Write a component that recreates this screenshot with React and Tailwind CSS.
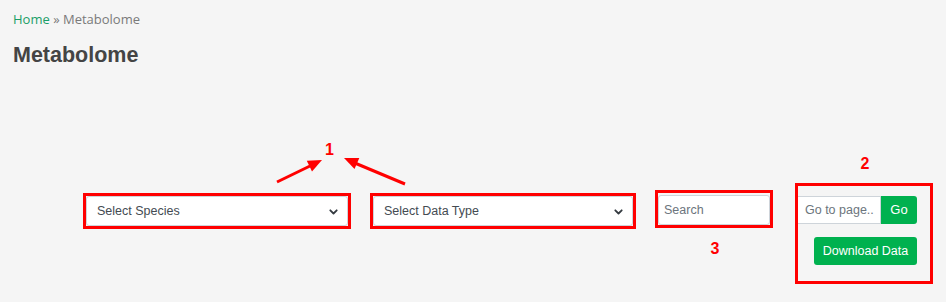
import React from "react";

const sans = { fontFamily: '"Liberation Sans", Arial, sans-serif' };

function Chevron() {
  return (
    <svg width="9" height="6" viewBox="0 0 9 6" className="absolute right-[9px] top-[12px]">
      <path d="M1.3 1.3 L4.5 4.5 L7.7 1.3" fill="none" stroke="#343a40" strokeWidth="1.8" strokeLinecap="round" strokeLinejoin="round" />
    </svg>
  );
}

function Select({ label, w }) {
  return (
    <div className={`relative h-[30px] ${w} bg-white border border-[#ced4da] rounded-[3px]`}>
      <div className="pl-[10px] leading-[28px] text-[12.5px] text-[#444b52]">{label}</div>
      <Chevron />
    </div>
  );
}

function Num({ children }) {
  return <div className="text-[16px] font-bold text-[#ff0000] leading-[20px]">{children}</div>;
}

export default function App() {
  return (
    <div className="relative w-[946px] h-[302px] bg-[#f5f5f5] overflow-hidden">
      <div className="px-[13px] pt-[9px]">
        <div className="text-[13px] leading-[20px] text-[#7a7a7a]" style={{ fontFamily: '"Open Sans", sans-serif' }}>
          <span className="text-[#1a9e68]">Home</span> » Metabolome
        </div>
        <h1 className="mt-[13px] text-[21.5px] font-bold leading-[26px] text-[#444444]" style={sans}>
          Metabolome
        </h1>
      </div>

      <div className="flex items-start pl-[83px] mt-[86px]" style={sans}>
        <div className="mt-[39px] border-[3px] border-[#ff0000]">
          <Select label="Select Species" w="w-[262px]" />
        </div>
        <div className="ml-[19px] mt-[39px] w-[266px] border-[3px] border-[#ff0000]">
          <Select label="Select Data Type" w="w-[260px]" />
        </div>
        <div className="ml-[19px] mt-[36px] flex flex-col items-center">
          <div className="w-[118px] h-[38px] border-[3px] border-[#ff0000] pt-[2px]">
            <div className="h-[30px] w-[112px] bg-white border border-[#ced4da] rounded-[3px] pl-[5px] leading-[28px] text-[12.5px] text-[#6c757d]">
              Search
            </div>
          </div>
          <div className="mt-[11px] pl-[2px]">
            <Num>3</Num>
          </div>
        </div>
        <div className="ml-[22px] flex flex-col items-center">
          <div className="pl-[2px]">
            <Num>2</Num>
          </div>
          <div className="mt-[9px] w-[138px] h-[101px] border-[3px] border-[#ff0000] pt-[10px] pr-[13px] flex flex-col items-end">
            <div className="flex h-[28px]">
              <div className="w-[83px] h-[28px] bg-white border border-[#ced4da] border-l-0 pl-[7px] leading-[26px] text-[12.5px] text-[#6c757d]">
                Go to page..
              </div>
              <div className="w-[36px] h-[28px] bg-[#00b14f] rounded-r-[3px] text-white text-[13px] leading-[28px] text-center">
                Go
              </div>
            </div>
            <div className="mt-[13px] w-[103px] h-[28px] bg-[#00b14f] rounded-[3px] text-white text-[12.5px] leading-[28px] text-center">
              Download Data
            </div>
          </div>
        </div>
      </div>

      {/* annotation "1" with its two arrows, drawn over the page */}
      <svg className="absolute left-0 top-0" width="946" height="302" viewBox="0 0 946 302">
        <line x1="277" y1="182" x2="310" y2="166" stroke="#ff0000" strokeWidth="3" />
        <polygon points="322,160 312,171.5 306.8,160.7" fill="#ff0000" />
        <line x1="405" y1="184" x2="356" y2="163.5" stroke="#ff0000" strokeWidth="3" />
        <polygon points="344,158 359.3,158 354.5,169" fill="#ff0000" />
      </svg>
      <div className="absolute left-[325px] top-[140px]" style={sans}>
        <Num>1</Num>
      </div>
    </div>
  );
}
